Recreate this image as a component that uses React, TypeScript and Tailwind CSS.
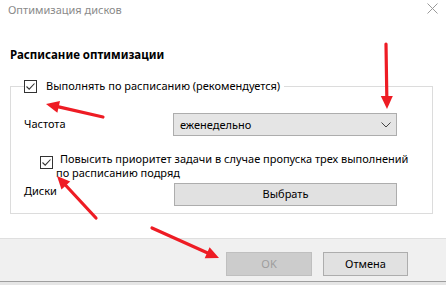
import React from "react";

// Красные стрелки поверх окна
function Arrow({ x1, y1, x2, y2 }: { x1: number; y1: number; x2: number; y2: number }) {
    const a = Math.atan2(y2 - y1, x2 - x1);
    const len = 13;
    const w = 6;
    const bx = x2 - len * Math.cos(a);
    const by = y2 - len * Math.sin(a);
    const px = -Math.sin(a) * w;
    const py = Math.cos(a) * w;
    return (
        <g>
            <line x1={x1} y1={y1} x2={bx} y2={by} stroke="#ee1c24" strokeWidth={3.2} strokeLinecap="round" />
            <polygon points={`${x2},${y2} ${bx + px},${by + py} ${bx - px},${by - py}`} fill="#ee1c24" />
        </g>
    );
}

function CheckBox() {
    return (
        <span className="w-[13px] h-[13px] border border-[#333333] bg-white flex items-center justify-center shrink-0">
            <svg width="11" height="11" viewBox="0 0 11 11">
                <path d="M1.5 5.5 L4.2 8.2 L9.5 2.5" fill="none" stroke="#333" strokeWidth="1.1" />
            </svg>
        </span>
    );
}

export default function App() {
    return (
        <div className="relative w-[446px] h-[285px] bg-white overflow-hidden text-[11px] text-black font-['Noto_Sans',sans-serif] flex flex-col">
            {/* title bar */}
            <div className="h-[19px] flex items-center justify-between pl-[8px] pr-[8px]">
                <span className="text-[#8a8a8a] leading-none">Оптимизация дисков</span>
                <svg width="11" height="11" viewBox="0 0 11 11" className="mt-[-2px]">
                    <path d="M0.5 0.5 L10.5 10.5 M10.5 0.5 L0.5 10.5" stroke="#9a9a9a" strokeWidth="1" />
                </svg>
            </div>

            <div className="pl-[10px] pt-[27px] font-bold text-[11.5px] leading-[18px]">Расписание оптимизации</div>

            <fieldset className="ml-[10px] mr-[13px] mt-[15px] h-[135px] min-w-0 border border-[#dcdcdc] pl-[13px] pr-[35px]">
                <legend className="px-0 flex items-center gap-[9px] leading-[14px]">
                    <CheckBox />
                    <span className="pr-[4px]">Выполнять по расписанию (рекомендуется)</span>
                </legend>

                <div className="flex items-center mt-[20px] h-[23px]">
                    <span className="w-[149px]">Частота</span>
                    <div className="flex-1 h-[23px] bg-[#e5e5e5] border border-[#adadad] flex items-center justify-between pl-[6px] pr-[5px]">
                        <span className="pt-[2px]">еженедельно</span>
                        <svg width="10" height="6" viewBox="0 0 10 6">
                            <path d="M0.5 0.5 L5 5 L9.5 0.5" fill="none" stroke="#444" strokeWidth="1" />
                        </svg>
                    </div>
                </div>

                <div className="flex mt-[16px] pl-[16px] gap-[7px] w-0 overflow-visible">
                    <div className="pt-[4px]">
                        <CheckBox />
                    </div>
                    <div className="leading-[14px] -ml-[4px] whitespace-nowrap">
                        <div className="pl-[4px]">Повысить приоритет задачи в случае пропуска трех выполнений</div>
                        <div>по расписанию подряд</div>
                    </div>
                </div>

                <div className="flex items-center mt-[3px] h-[23px]">
                    <span className="w-[150px] -mt-[7px]">Диски</span>
                    <div className="flex-1 h-[23px] bg-[#e1e1e1] border border-[#adadad] flex items-center justify-center">Выбрать</div>
                </div>
            </fieldset>

            {/* footer */}
            <div className="mt-[24px] h-[43px] bg-[#f0f0f0] border-t border-[#dfdfdf] flex items-start pt-[13px] justify-end gap-[11px] pr-[38px]">
                <div className="w-[86px] h-[24px] bg-[#cccccc] border border-[#bfbfbf] text-[#9d9d9d] flex items-center justify-center">OK</div>
                <div className="w-[85px] h-[24px] bg-[#e1e1e1] border border-[#adadad] flex items-center justify-center">Отмена</div>
            </div>
            <div className="flex-1 bg-[#e6e6e6] border-t border-[#9f9f9f]" />

            <svg className="absolute inset-0 pointer-events-none" width="446" height="285">
                <Arrow x1={103} y1={117} x2={46} y2={104} />
                <Arrow x1={386} y1={44} x2={387} y2={109} />
                <Arrow x1={96} y1={218} x2={57} y2={176} />
                <Arrow x1={152} y1={228} x2={219} y2={258} />
            </svg>
        </div>
    );
}
